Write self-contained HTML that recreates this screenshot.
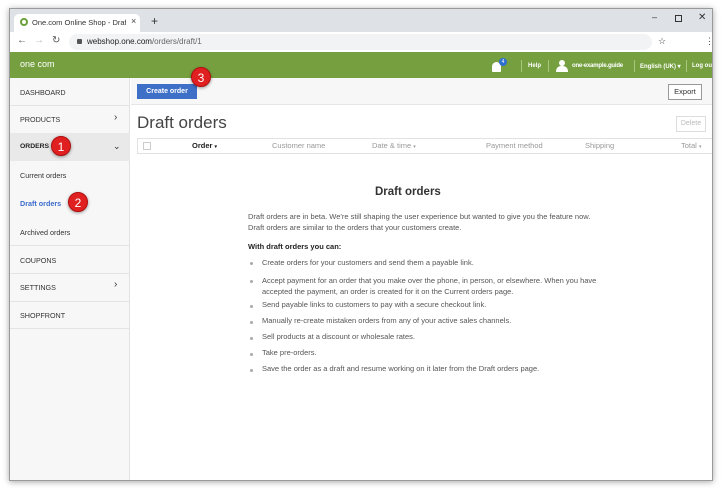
<!DOCTYPE html>
<html><head><meta charset="utf-8"><style>
*{margin:0;padding:0;box-sizing:border-box}
body{width:721px;height:488px;background:#fff;font-family:"Liberation Sans",sans-serif;position:relative;overflow:hidden}
.a{position:absolute;white-space:nowrap}
.win{left:9px;top:8px;width:704px;height:473px;border:1px solid #9a9a9a;box-shadow:0 1px 6px rgba(0,0,0,.35);background:#fff;overflow:hidden}
.sb{font-size:7.2px;color:#333;left:10px}
.hr{height:1px;background:#e4e4e4;left:0;width:120px}
.li{left:238px;font-size:7.5px;color:#555;white-space:nowrap}
.dot{left:240px;width:3px;height:3px;border-radius:50%;background:#aaa}
.badge{width:20px;height:20px;border-radius:50%;background:#e02020;color:#fff;font-size:12px;text-align:center;line-height:20px;box-shadow:0 1px 3px rgba(0,0,0,.4);border:1px solid #b01010}
.th{top:140px;font-size:7.5px;color:#999}
.hd{font-size:6px;color:#fff;font-weight:bold;top:54px}
</style></head><body>
<div class="a win">
 <div class="a" style="left:0;top:0;width:704px;height:23px;background:#dee1e6"></div>
 <div class="a" style="left:4px;top:5px;width:126px;height:18px;background:#fff;border-radius:5px 5px 0 0"></div>
 <div class="a" style="left:10px;top:9px;width:8px;height:8px;border-radius:50%;border:2px solid #6ca13a"></div>
 <div class="a" style="left:22px;top:9px;width:94px;overflow:hidden;font-size:7.5px;color:#333">One.com Online Shop - Draft or</div>
 <div class="a" style="left:121px;top:7px;font-size:9px;color:#444">×</div>
 <div class="a" style="left:141px;top:5px;font-size:12px;color:#333">+</div>
 <div class="a" style="left:642px;top:3px;font-size:9px;color:#333">–</div>
 <div class="a" style="left:665px;top:6px;width:7px;height:7px;border:1px solid #333"></div>
 <div class="a" style="left:688px;top:3px;font-size:10px;color:#333">✕</div>
 <div class="a" style="left:0;top:23px;width:704px;height:20px;background:#fff"></div>
 <div class="a" style="left:7px;top:26px;font-size:10px;color:#555">←</div>
 <div class="a" style="left:24px;top:26px;font-size:10px;color:#bbb">→</div>
 <div class="a" style="left:42px;top:26px;font-size:10px;color:#555">↻</div>
 <div class="a" style="left:59px;top:25px;width:583px;height:16px;border-radius:8px;background:#f1f3f4"></div>
 <div class="a" style="left:67px;top:30px;width:5px;height:5px;background:#555;border-radius:1px"></div>
 <div class="a" style="left:77px;top:28px;font-size:8px;color:#222">webshop.one.com<span style="color:#666">/orders/draft/1</span></div>
 <div class="a" style="left:648px;top:27px;font-size:9px;color:#444">☆</div>
 <div class="a" style="left:695px;top:27px;font-size:9px;color:#444">⋮</div>
 <div class="a" style="left:0;top:43px;width:704px;height:26px;background:#76a040"></div>
 <div class="a" style="left:10px;top:50px;font-size:9px;color:#fff">one com</div>
 <div class="a" style="left:482px;top:53px;width:9px;height:10px;background:#fff;border-radius:5px 5px 1px 1px"></div>
 <div class="a" style="left:489px;top:49px;width:8px;height:8px;border-radius:50%;background:#2f6fd0;color:#fff;font-size:5px;text-align:center;line-height:8px">4</div>
 <div class="a" style="left:511px;top:51px;width:1px;height:12px;background:#a9c67f"></div>
 <div class="a hd" style="left:518px">Help</div>
 <div class="a" style="left:538px;top:51px;width:1px;height:12px;background:#a9c67f"></div>
 <div class="a" style="left:549px;top:51px;width:6px;height:6px;border-radius:50%;background:#fff"></div>
 <div class="a" style="left:546px;top:57px;width:12px;height:6px;border-radius:5px 5px 0 0;background:#fff"></div>
 <div class="a hd" style="left:562px;letter-spacing:-0.2px">one-example.guide</div>
 <div class="a" style="left:624px;top:51px;width:1px;height:12px;background:#a9c67f"></div>
 <div class="a hd" style="left:630px">English (UK) ▾</div>
 <div class="a" style="left:676px;top:51px;width:1px;height:12px;background:#a9c67f"></div>
 <div class="a hd" style="left:682px">Log out</div>
 <div class="a" style="left:0;top:69px;width:120px;height:404px;background:#f7f7f7;border-right:1px solid #e2e2e2">
  <div class="a sb" style="top:10px">DASHBOARD</div>
  <div class="a hr" style="top:27px"></div>
  <div class="a sb" style="top:37px">PRODUCTS</div>
  <div class="a" style="left:104px;top:34px;font-size:10px;color:#333">›</div>
  <div class="a hr" style="top:55px"></div>
  <div class="a" style="left:0;top:55px;width:120px;height:28px;background:#e9e9e9"></div>
  <div class="a sb" style="top:65px;font-weight:bold;color:#222;font-size:6.8px">ORDERS</div>
  <div class="a" style="left:103px;top:63px;font-size:9px;color:#333">⌄</div>
  <div class="a sb" style="top:93px">Current orders</div>
  <div class="a sb" style="top:121px;font-weight:bold;color:#3b6ccc">Draft orders</div>
  <div class="a sb" style="top:150px">Archived orders</div>
  <div class="a hr" style="top:167px"></div>
  <div class="a sb" style="top:178px">COUPONS</div>
  <div class="a hr" style="top:195px"></div>
  <div class="a sb" style="top:205px">SETTINGS</div>
  <div class="a" style="left:104px;top:201px;font-size:10px;color:#333">›</div>
  <div class="a hr" style="top:223px"></div>
  <div class="a sb" style="top:233px">SHOPFRONT</div>
  <div class="a hr" style="top:250px"></div>
 </div>
 <div class="a" style="left:121px;top:69px;width:583px;height:27px;background:#f7f7f7;border-bottom:1px solid #e6e6e6"></div>
 <div class="a" style="left:127px;top:75px;width:60px;height:15px;background:#3e70c8;color:#fff;font-size:7px;font-weight:bold;text-align:center;line-height:15px">Create order</div>
 <div class="a" style="left:658px;top:75px;width:34px;height:16px;background:#fff;border:1px solid #999;font-size:7.5px;color:#333;text-align:center;line-height:14px">Export</div>
 <div class="a" style="left:127px;top:104px;font-size:17px;color:#444">Draft orders</div>
 <div class="a" style="left:666px;top:107px;width:30px;height:16px;border:1px solid #ddd;font-size:7px;color:#bbb;text-align:center;line-height:14px">Delete</div>
 <div class="a" style="left:127px;top:129px;width:577px;height:16px;border:1px solid #e2e2e2;border-right:none"></div>
 <div class="a" style="left:133px;top:133px;width:8px;height:8px;border:1px solid #ccc"></div>
 <div class="a th" style="left:182px;top:132px;color:#222;font-weight:bold">Order <span style="font-size:5px">▾</span></div>
 <div class="a th" style="left:262px;top:132px">Customer name</div>
 <div class="a th" style="left:362px;top:132px">Date &amp; time <span style="font-size:5px">▾</span></div>
 <div class="a th" style="left:476px;top:132px">Payment method</div>
 <div class="a th" style="left:575px;top:132px">Shipping</div>
 <div class="a th" style="left:671px;top:132px">Total <span style="font-size:5px">▾</span></div>
 <div class="a" style="left:365px;top:177px;font-size:11.5px;font-weight:bold;color:#333">Draft orders</div>
 <div class="a li" style="left:238px;top:202px;line-height:11px">Draft orders are in beta. We're still shaping the user experience but wanted to give you the feature now.<br>Draft orders are similar to the orders that your customers create.</div>
 <div class="a li" style="left:238px;top:233px;font-weight:bold;color:#222">With draft orders you can:</div>
 <div class="a dot" style="top:253px"></div><div class="a li" style="left:252px;top:249px">Create orders for your customers and send them a payable link.</div>
 <div class="a dot" style="top:271px"></div><div class="a li" style="left:252px;top:266px;line-height:11px">Accept payment for an order that you make over the phone, in person, or elsewhere. When you have<br>accepted the payment, an order is created for it on the Current orders page.</div>
 <div class="a dot" style="top:296px"></div><div class="a li" style="left:252px;top:291px">Send payable links to customers to pay with a secure checkout link.</div>
 <div class="a dot" style="top:312px"></div><div class="a li" style="left:252px;top:307px">Manually re-create mistaken orders from any of your active sales channels.</div>
 <div class="a dot" style="top:328px"></div><div class="a li" style="left:252px;top:323px">Sell products at a discount or wholesale rates.</div>
 <div class="a dot" style="top:344px"></div><div class="a li" style="left:252px;top:339px">Take pre-orders.</div>
 <div class="a dot" style="top:360px"></div><div class="a li" style="left:252px;top:355px">Save the order as a draft and resume working on it later from the Draft orders page.</div>
</div>
<div class="a badge" style="left:51px;top:136px">1</div>
<div class="a badge" style="left:68px;top:192px">2</div>
<div class="a badge" style="left:191px;top:67px">3</div>
</body></html>
